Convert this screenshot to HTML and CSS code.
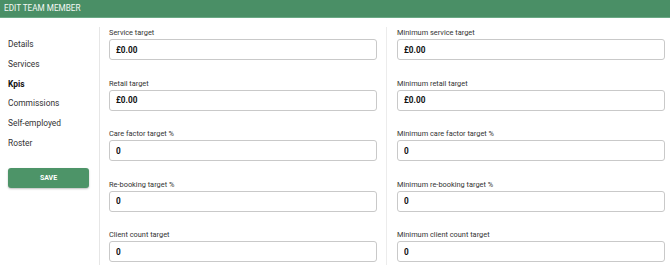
FILE: index.html
```html
<!DOCTYPE html>
<html lang="en">
<head>
    <meta charset="UTF-8">
    <meta name="viewport" content="width=device-width, initial-scale=1.0">
    <title>Edit Team Member</title>
    <link rel="stylesheet" href="styles.css">
</head>
<body>

    <div class="header">EDIT TEAM MEMBER</div>

    <div class="page">
        <!-- Left menu -->
        <div class="sidebar">
            <ul class="menu">
                <li>Details</li>
                <li>Services</li>
                <li class="active">Kpis</li>
                <li>Commissions</li>
                <li>Self-employed</li>
                <li>Roster</li>
            </ul>
            <button class="save">SAVE</button>
        </div>

        <!-- KPI targets -->
        <div class="column first">
            <div class="field">
                <label>Service target</label>
                <input class="textbox" type="text" value="£0.00">
            </div>
            <div class="field">
                <label>Retail target</label>
                <input class="textbox" type="text" value="£0.00">
            </div>
            <div class="field">
                <label>Care factor target %</label>
                <input class="textbox" type="text" value="0">
            </div>
            <div class="field">
                <label>Re-booking target %</label>
                <input class="textbox" type="text" value="0">
            </div>
            <div class="field">
                <label>Client count target</label>
                <input class="textbox" type="text" value="0">
            </div>
        </div>

        <div class="column second">
            <div class="field">
                <label>Minimum service target</label>
                <input class="textbox" type="text" value="£0.00">
            </div>
            <div class="field">
                <label>Minimum retail target</label>
                <input class="textbox" type="text" value="£0.00">
            </div>
            <div class="field">
                <label>Minimum care factor target %</label>
                <input class="textbox" type="text" value="0">
            </div>
            <div class="field">
                <label>Minimum re-booking target %</label>
                <input class="textbox" type="text" value="0">
            </div>
            <div class="field">
                <label>Minimum client count target</label>
                <input class="textbox" type="text" value="0">
            </div>
        </div>
    </div>

</body>
</html>
```

FILE: styles.css
```css
body {
    margin: 0;
    padding: 0;
    font-family: Roboto, "Liberation Sans", sans-serif;
    color: #222;
    background-color: #fff;
    overflow: hidden;
}

.header {
    height: 18px;
    line-height: 17px;
    padding-left: 4px;
    background-color: #4a8f66;
    border-bottom: 1px solid #6aa985;
    box-sizing: border-box;
    color: #f4f8f5;
    font-size: 8.2px;
}

.page {
    display: grid;
    grid-template-columns: 100px 287px 1fr;
    margin-top: 9px;
}

.sidebar {
    border-right: 1px solid #e6e6e6;
    padding: 7px 0 0 8px;
    height: 240px;
}

.menu {
    list-style: none;
    margin: 0;
    padding: 0;
}

.menu li {
    height: 19.8px;
    line-height: 20px;
    font-size: 8.4px;
    color: #333;
}

.menu li.active {
    font-weight: bold;
    color: #111;
}

.save {
    display: block;
    width: 81px;
    height: 20px;
    margin-top: 15px;
    padding: 0;
    background-color: #4d9468;
    border: none;
    border-radius: 3px;
    box-shadow: 0 1px 2px rgba(0, 0, 0, 0.25);
    color: #fff;
    font-family: Roboto, "Liberation Sans", sans-serif;
    font-size: 7px;
    font-weight: bold;
}

.column {
    display: flex;
    flex-direction: column;
    gap: 17.5px;
}

.column.first {
    padding: 0 9px;
    border-right: 1px solid #ececec;
}

.column.second {
    padding: 0 5px 0 10px;
}

.field label {
    display: block;
    height: 10px;
    line-height: 11px;
    margin-bottom: 2px;
    font-size: 7.4px;
    color: #333;
}

.textbox {
    display: block;
    width: 100%;
    height: 21px;
    margin: 0;
    padding: 0 6px;
    box-sizing: border-box;
    border: 1px solid #c9c9c9;
    border-radius: 3px;
    font-family: Roboto, "Liberation Sans", sans-serif;
    font-size: 8.2px;
    font-weight: bold;
    color: #111;
}
```
